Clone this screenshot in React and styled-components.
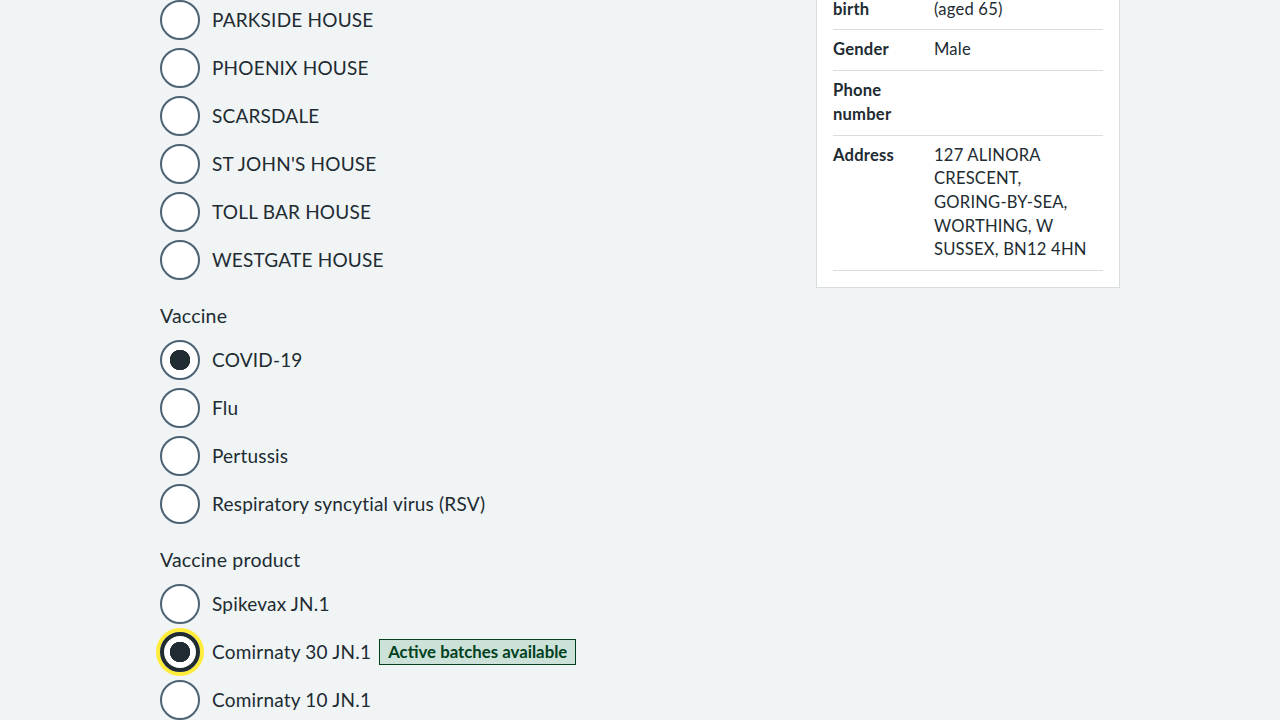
import React from "react";
import styled, { createGlobalStyle, css } from "styled-components";

const GlobalStyle = createGlobalStyle`
  html, body {
    margin: 0;
    background-color: #f0f4f5;
    color: #212b32;
    font-family: Lato, "Liberation Sans", sans-serif;
    letter-spacing: 0.2px;
    overflow: hidden;
  }
`;

const Page = styled.main`
  width: 960px;
  margin: 0 auto;
  display: grid;
  grid-template-columns: 640px 304px;
  column-gap: 16px;
  align-items: start;
`;

const Fieldset = styled.fieldset`
  border: 0;
  padding: 0;
  margin: 0 0 24px;
  min-width: 0;

  &:last-child {
    margin-bottom: 0;
  }
`;

const Legend = styled.legend`
  padding: 0;
  margin: 0 0 12px;
  font-size: 19.5px;
  line-height: 24px;
`;

const RadioItem = styled.div`
  display: flex;
  align-items: center;
  min-height: 40px;
  margin-bottom: 8px;

  &:last-child {
    margin-bottom: 0;
  }
`;

const RadioInput = styled.input.attrs({ type: "radio" })`
  appearance: none;
  box-sizing: border-box;
  flex: none;
  width: 40px;
  height: 40px;
  margin: 0;
  border: 2px solid #4c6272;
  border-radius: 50%;
  background: #fff;

  &:checked {
    background: radial-gradient(circle at center, #212b32 10px, #fff 10.5px);
  }

  ${(p) =>
    p.$focused &&
    css`
      border: 4px solid #212b32;
      box-shadow: 0 0 0 4px #ffeb3b;
    `}
`;

const RadioLabel = styled.label`
  padding: 0 12px;
  font-size: 19px;
  line-height: 28px;
`;

const Tag = styled.strong`
  display: inline-block;
  margin-left: 3px;
  padding: 0 8px;
  border: 1px solid #00401e;
  background-color: #cce2d8;
  color: #00401e;
  font-size: 16.8px;
  line-height: 24px;
  font-weight: 700;
  letter-spacing: 0;
  vertical-align: 1px;
`;

const Card = styled.aside`
  margin-top: -51px;
  padding: 16px;
  background-color: #fff;
  border: 1px solid #d8dde0;
`;

const SummaryList = styled.dl`
  margin: 0;
`;

const SummaryRow = styled.div`
  display: grid;
  grid-template-columns: 101px 1fr;
  padding: 8px 0;
  border-bottom: 1px solid #d8dde0;
  font-size: 16.6px;
  line-height: 23.7px;
`;

const SummaryKey = styled.dt`
  margin: 0;
  font-weight: 700;
  padding-right: 12px;
`;

const SummaryValue = styled.dd`
  margin: 0;
  padding-right: 14px;
`;

const careHomes = [
  "PARKSIDE HOUSE",
  "PHOENIX HOUSE",
  "SCARSDALE",
  "ST JOHN'S HOUSE",
  "TOLL BAR HOUSE",
  "WESTGATE HOUSE",
];

const vaccines = ["COVID-19", "Flu", "Pertussis", "Respiratory syncytial virus (RSV)"];

const products = [
  { name: "Spikevax JN.1" },
  { name: "Comirnaty 30 JN.1", tag: "Active batches available", focused: true },
  { name: "Comirnaty 10 JN.1" },
];

function Radio({ name, id, label, checked, focused, children }) {
  return (
    <RadioItem>
      <RadioInput id={id} name={name} defaultChecked={checked} $focused={focused} />
      <RadioLabel htmlFor={id}>
        {label}
        {children}
      </RadioLabel>
    </RadioItem>
  );
}

export default function App() {
  return (
    <>
      <GlobalStyle />
      <Page>
        <form>
          <Fieldset>
            {careHomes.map((home, i) => (
              <Radio key={home} name="site" id={`site-${i}`} label={home} />
            ))}
          </Fieldset>
          <Fieldset>
            <Legend>Vaccine</Legend>
            {vaccines.map((v, i) => (
              <Radio key={v} name="vaccine" id={`vaccine-${i}`} label={v} checked={i === 0} />
            ))}
          </Fieldset>
          <Fieldset>
            <Legend>Vaccine product</Legend>
            {products.map((p, i) => (
              <Radio
                key={p.name}
                name="product"
                id={`product-${i}`}
                label={p.name}
                checked={p.focused}
                focused={p.focused}
              >
                {p.tag && (
                  <>
                    {" "}
                    <Tag>{p.tag}</Tag>
                  </>
                )}
              </Radio>
            ))}
          </Fieldset>
        </form>
        <Card>
          <SummaryList>
            <SummaryRow>
              <SummaryKey>Date of birth</SummaryKey>
              <SummaryValue>
                1 January 1960
                <br />
                (aged 65)
              </SummaryValue>
            </SummaryRow>
            <SummaryRow>
              <SummaryKey>Gender</SummaryKey>
              <SummaryValue>Male</SummaryValue>
            </SummaryRow>
            <SummaryRow>
              <SummaryKey>Phone number</SummaryKey>
              <SummaryValue />
            </SummaryRow>
            <SummaryRow>
              <SummaryKey>Address</SummaryKey>
              <SummaryValue>127 ALINORA CRESCENT, GORING-BY-SEA, WORTHING, W SUSSEX, BN12 4HN</SummaryValue>
            </SummaryRow>
          </SummaryList>
        </Card>
      </Page>
    </>
  );
}
